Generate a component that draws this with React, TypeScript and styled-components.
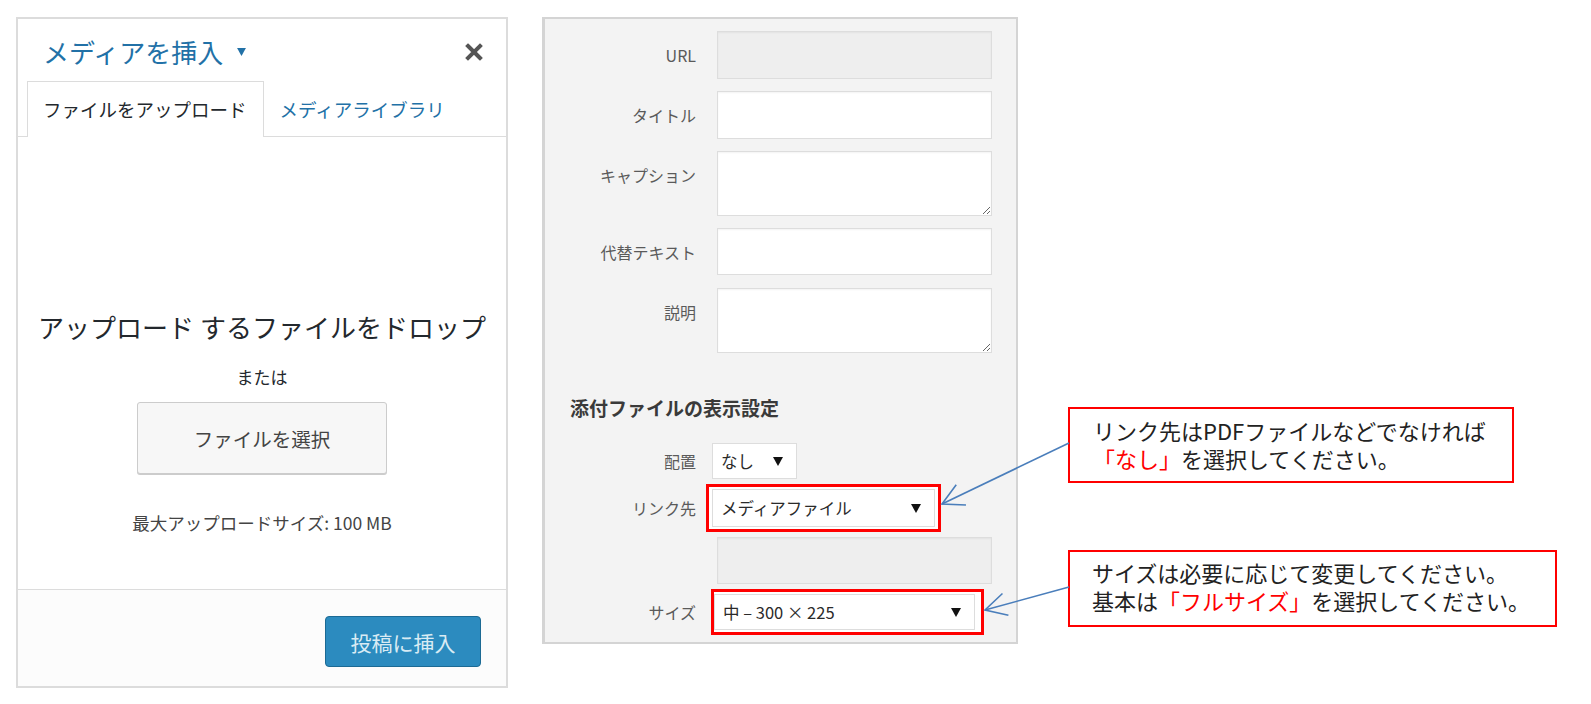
import React from "react";
import styled, { createGlobalStyle } from "styled-components";

const GlobalStyle = createGlobalStyle`
  html, body {
    margin: 0;
    padding: 0;
    background: #fff;
  }
  body {
    font-family: "Noto Sans CJK JP", "Noto Sans", sans-serif;
    color: #333;
  }
`;

const Page = styled.div`
  position: relative;
  width: 1591px;
  height: 704px;
  box-sizing: border-box;
  padding: 17px 0 0 16px;
  display: flex;
  align-items: flex-start;
  overflow: hidden;
`;

/* ---------- left: media modal ---------- */

const MediaModal = styled.section`
  width: 492px;
  height: 671px;
  box-sizing: border-box;
  border: 2px solid #dcdcdc;
  background: #fff;
  display: flex;
  flex-direction: column;
`;

const ModalHeader = styled.header`
  height: 62px;
  box-sizing: border-box;
  padding: 4px 23px 0 25px;
  display: flex;
  align-items: center;
  justify-content: space-between;
`;

const ModalTitle = styled.h1`
  margin: 0;
  display: flex;
  align-items: center;
  gap: 13px;
  font-size: 26px;
  line-height: 32px;
  font-weight: 400;
  color: #2271a7;
`;

const CloseButton = styled.button`
  border: 0;
  padding: 0;
  background: none;
  display: flex;
  cursor: pointer;
`;

const TabBar = styled.nav`
  height: 56px;
  box-sizing: border-box;
  padding-left: 9px;
  border-bottom: 1px solid #dcdcdc;
  display: flex;
`;

const Tab = styled.div<{ $active?: boolean }>`
  height: 56px;
  box-sizing: border-box;
  margin-bottom: -1px;
  padding: 0 16px 2px 15px;
  display: flex;
  align-items: center;
  font-size: 18.5px;
  color: ${({ $active }) => ($active ? "#23282d" : "#2271a7")};
  background: ${({ $active }) => ($active ? "#fff" : "transparent")};
  border: 1px solid ${({ $active }) => ($active ? "#dcdcdc" : "transparent")};
  border-bottom: 0;
`;

const DropZone = styled.div`
  flex: 1;
  padding-top: 172px;
  display: flex;
  flex-direction: column;
  align-items: center;
  color: #23282d;
`;

const DropTitle = styled.p`
  margin: 0;
  font-size: 26px;
  line-height: 36px;
`;

const OrText = styled.p`
  margin: 20px 0 0;
  font-size: 17px;
  line-height: 24px;
`;

const SelectFileButton = styled.button`
  margin-top: 13px;
  width: 250px;
  height: 72px;
  border: 1px solid #cccccc;
  border-radius: 3px;
  background: #f7f7f7;
  box-shadow: 0 1px 0 #cccccc;
  font-family: inherit;
  font-size: 19.5px;
  color: #444;
  cursor: pointer;
`;

const MaxSize = styled.p`
  margin: 38px 0 0;
  font-size: 17.5px;
  line-height: 22px;
  color: #444;
`;

const ModalFooter = styled.footer`
  height: 97px;
  box-sizing: border-box;
  border-top: 1px solid #dcdcdc;
  background: #fcfcfc;
  padding: 26px 25px 0 0;
  display: flex;
  justify-content: flex-end;
  align-items: flex-start;
`;

const PrimaryButton = styled.button`
  width: 156px;
  height: 51px;
  border: 1px solid #1c6a94;
  border-radius: 4px;
  background: #2c8bbf;
  font-family: inherit;
  font-size: 21px;
  color: #d9ebf4;
  cursor: default;
`;

/* ---------- middle: attachment details ---------- */

const DetailsPanel = styled.section`
  margin-left: 34px;
  width: 476px;
  height: 627px;
  box-sizing: border-box;
  border: 2px solid #d4d4d4;
  border-left-width: 3px;
  background: #f3f3f3;
  padding: 12px 24px 0 0;
`;

const FieldGroup = styled.div<{ $gap: number; $top?: number }>`
  margin-top: ${({ $top }) => $top ?? 0}px;
  display: flex;
  flex-direction: column;
  gap: ${({ $gap }) => $gap}px;
`;

const FieldRow = styled.div<{ $center?: boolean }>`
  display: grid;
  grid-template-columns: 151px 1fr;
  column-gap: 16px;
  align-items: ${({ $center }) => ($center ? "center" : "start")};
`;

const FieldLabel = styled.label<{ $center?: boolean }>`
  text-align: right;
  font-size: 16px;
  line-height: ${({ $center }) => ($center ? "24px" : "48px")};
  color: #5a5a5a;
`;

const TextInput = styled.input<{ $height: number }>`
  margin-left: 5px;
  height: ${({ $height }) => $height}px;
  box-sizing: border-box;
  border: 1px solid #dddddd;
  background: ${({ disabled }) => (disabled ? "#eeeeee" : "#fff")};
  box-shadow: inset 0 1px 2px rgba(0, 0, 0, 0.05);
  outline: none;
`;

const TextArea = styled.textarea`
  display: block;
  margin: 0 0 0 5px;
  width: calc(100% - 5px);
  height: 65px;
  box-sizing: border-box;
  border: 1px solid #dddddd;
  background: #fff;
  box-shadow: inset 0 1px 2px rgba(0, 0, 0, 0.05);
  resize: vertical;
  outline: none;
`;

const SectionHeading = styled.h2`
  margin: 43px 0 0 25px;
  font-size: 19px;
  line-height: 24px;
  font-weight: 700;
  color: #3a3a3a;
`;

const Highlight = styled.div<{ $pad: string; $shift: number }>`
  justify-self: start;
  margin-left: ${({ $shift }) => $shift}px;
  display: flex;
  border: 3px solid #ff0000;
  padding: ${({ $pad }) => $pad};
  background: #fff;
`;

const SelectBox = styled.div<{ $width: number; $height: number }>`
  justify-self: start;
  width: ${({ $width }) => $width}px;
  height: ${({ $height }) => $height}px;
  box-sizing: border-box;
  border: 1px solid #dddddd;
  background: #fff;
  padding: 0 13px 0 8px;
  display: flex;
  align-items: center;
  justify-content: space-between;
  font-size: 16.5px;
  color: #2a2a2a;
`;

/* ---------- right: notes ---------- */

const Notes = styled.aside`
  margin-left: 50px;
  display: flex;
  flex-direction: column;
  align-items: flex-start;
`;

const Callout = styled.div<{ $width: number; $top: number; $pad: string }>`
  margin-top: ${({ $top }) => $top}px;
  width: ${({ $width }) => $width}px;
  box-sizing: border-box;
  border: 2px solid #ff0000;
  padding: ${({ $pad }) => $pad};
  background: #fff;
  font-size: 22px;
  line-height: 28px;
  color: #222;
  white-space: nowrap;
`;

const Red = styled.span`
  color: #ff0000;
`;

const ArrowLayer = styled.svg`
  position: absolute;
  left: 0;
  top: 0;
  pointer-events: none;
`;

const Caret = ({ color = "#111", w = 10, h = 9 }: { color?: string; w?: number; h?: number }) => (
  <svg width={w} height={h} viewBox="0 0 10 9">
    <polygon points="0,0 10,0 5,9" fill={color} />
  </svg>
);

const CloseIcon = () => (
  <svg width="18" height="18" viewBox="0 0 18 18">
    <path d="M3 3 L15 15 M15 3 L3 15" stroke="#555" strokeWidth="4" strokeLinecap="square" />
  </svg>
);

type Pt = [number, number];

const headPoints = (tip: Pt, from: Pt, len: number, spread: number) => {
  const ang = Math.atan2(from[1] - tip[1], from[0] - tip[0]);
  const s = (spread * Math.PI) / 180;
  const a: Pt = [tip[0] + len * Math.cos(ang - s), tip[1] + len * Math.sin(ang - s)];
  const b: Pt = [tip[0] + len * Math.cos(ang + s), tip[1] + len * Math.sin(ang + s)];
  return `${a[0]},${a[1]} ${tip[0]},${tip[1]} ${b[0]},${b[1]}`;
};

const arrows: { from: Pt; tip: Pt }[] = [
  { from: [1069, 443], tip: [942, 504] },
  { from: [1069, 587], tip: [985, 610] },
];

export default function App() {
  return (
    <>
      <GlobalStyle />
      <Page>
        <MediaModal>
          <ModalHeader>
            <ModalTitle>
              メディアを挿入
              <Caret color="#2271a7" w={11} h={8} />
            </ModalTitle>
            <CloseButton aria-label="閉じる">
              <CloseIcon />
            </CloseButton>
          </ModalHeader>
          <TabBar>
            <Tab $active>ファイルをアップロード</Tab>
            <Tab>メディアライブラリ</Tab>
          </TabBar>
          <DropZone>
            <DropTitle>アップロード するファイルをドロップ</DropTitle>
            <OrText>または</OrText>
            <SelectFileButton>ファイルを選択</SelectFileButton>
            <MaxSize>最大アップロードサイズ: 100 MB</MaxSize>
          </DropZone>
          <ModalFooter>
            <PrimaryButton>投稿に挿入</PrimaryButton>
          </ModalFooter>
        </MediaModal>

        <DetailsPanel>
          <FieldGroup $gap={12}>
            <FieldRow>
              <FieldLabel>URL</FieldLabel>
              <TextInput $height={48} disabled />
            </FieldRow>
            <FieldRow>
              <FieldLabel>タイトル</FieldLabel>
              <TextInput $height={48} />
            </FieldRow>
            <FieldRow>
              <FieldLabel>キャプション</FieldLabel>
              <TextArea />
            </FieldRow>
            <FieldRow>
              <FieldLabel>代替テキスト</FieldLabel>
              <TextInput $height={47} />
            </FieldRow>
            <FieldRow>
              <FieldLabel>説明</FieldLabel>
              <TextArea />
            </FieldRow>
          </FieldGroup>

          <SectionHeading>添付ファイルの表示設定</SectionHeading>

          <FieldGroup $gap={5} $top={23}>
            <FieldRow $center>
              <FieldLabel $center>配置</FieldLabel>
              <SelectBox $width={85} $height={36}>
                なし
                <Caret />
              </SelectBox>
            </FieldRow>
            <FieldRow $center>
              <FieldLabel $center>リンク先</FieldLabel>
              <Highlight $pad="2px 3px" $shift={-6}>
                <SelectBox $width={223} $height={38}>
                  メディアファイル
                  <Caret />
                </SelectBox>
              </Highlight>
            </FieldRow>
            <FieldRow $center>
              <span />
              <TextInput $height={47} disabled />
            </FieldRow>
            <FieldRow $center>
              <FieldLabel $center>サイズ</FieldLabel>
              <Highlight $pad="2px 6px 2px 0" $shift={-1}>
                <SelectBox $width={261} $height={36}>
                  中 – 300 × 225
                  <Caret />
                </SelectBox>
              </Highlight>
            </FieldRow>
          </FieldGroup>
        </DetailsPanel>

        <Notes>
          <Callout $width={446} $top={390} $pad="7px 10px 9px 23px">
            リンク先はPDFファイルなどでなければ
            <br />
            <Red>「なし」</Red>を選択してください。
          </Callout>
          <Callout $width={489} $top={67} $pad="6px 10px 11px 22px">
            サイズは必要に応じて変更してください。
            <br />
            基本は<Red>「フルサイズ」</Red>を選択してください。
          </Callout>
        </Notes>

        <ArrowLayer width={1591} height={704}>
          {arrows.map(({ from, tip }, i) => (
            <g key={i} stroke="#4a7ebb" strokeWidth={1.6} fill="none">
              <line x1={from[0]} y1={from[1]} x2={tip[0]} y2={tip[1]} />
              <polyline points={headPoints(tip, from, 24, 28)} />
            </g>
          ))}
        </ArrowLayer>
      </Page>
    </>
  );
}
